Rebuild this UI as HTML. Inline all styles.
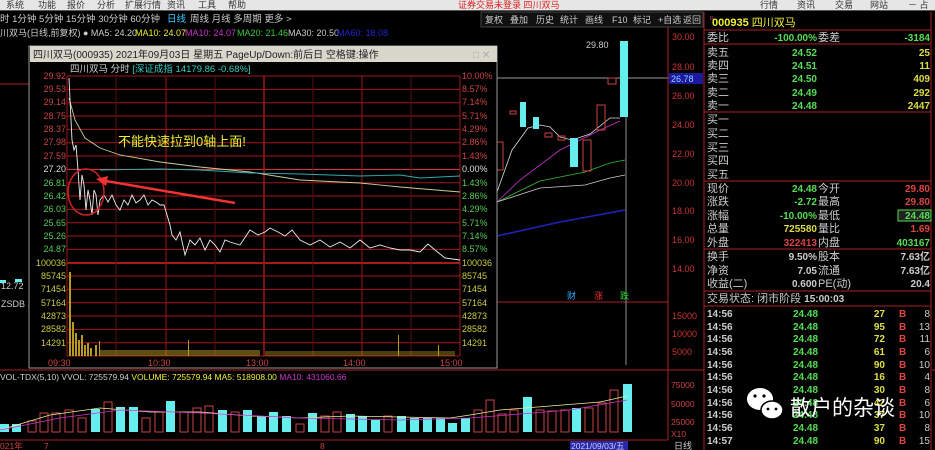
<!DOCTYPE html>
<html><head><meta charset="utf-8"><style>
html,body{margin:0;padding:0;background:#000;width:935px;height:450px;overflow:hidden}
svg{display:block}
text{font-family:"Liberation Sans","Noto Sans CJK SC",sans-serif}
</style></head><body>
<svg width="935" height="450" viewBox="0 0 935 450" xmlns="http://www.w3.org/2000/svg">
<rect width="935" height="450" fill="#000"/>
<rect x="0" y="0" width="935" height="10" fill="#e6e6e6"/>
<g font-size="9" fill="#333">
<text x="6" y="8">系统</text><text x="38" y="8">功能</text><text x="67" y="8">报价</text><text x="97" y="8">分析</text><text x="125" y="8">扩展行情</text><text x="167" y="8">资讯</text><text x="198" y="8">工具</text><text x="228" y="8">帮助</text>
<text x="760" y="8">行情</text><text x="797" y="8">资讯</text><text x="835" y="8">交易</text><text x="870" y="8">网站</text><text x="908" y="8">－ 占</text>
</g>
<text x="458" y="8" font-size="9" fill="#e02020">证券交易未登录 四川双马</text>
<rect x="0" y="10" width="935" height="1" fill="#555"/>
<g font-size="9.5" fill="#ccc">
<text x="0" y="22">时 1分钟 5分钟 15分钟 30分钟 60分钟</text>
<text x="167" y="22" fill="#3cf">日线</text><text x="190" y="22">周线 月线 多周期 更多 &gt;</text>
</g>
<g font-size="9" fill="#ccc">
<rect x="481" y="12" width="222" height="15" fill="#111" stroke="#444"/>
<text x="485" y="23">复权</text><text x="510" y="23">叠加</text><text x="536" y="23">历史</text><text x="560" y="23">统计</text><text x="585" y="23">画线</text><text x="612" y="23">F10</text><text x="633" y="23">标记</text><text x="658" y="23">+自选</text><text x="683" y="23">返回</text>
</g>
<g font-size="9">
<text x="0" y="36" fill="#ccc">川双马(日线,前复权) ● MA5: 24.20</text>
<text x="135" y="36" fill="#ee3">MA10: 24.07</text>
<text x="185" y="36" fill="#c3c">MA10: 24.07</text>
<text x="237" y="36" fill="#3c3">MA20: 21.46</text>
<text x="288" y="36" fill="#ccc">MA30: 20.50</text>
<text x="337" y="36" fill="#22c">MA60: 18.08</text>
</g>
<line x1="497" y1="78" x2="670" y2="78" stroke="#ccc" stroke-width="0.7"/>
<line x1="668" y1="27" x2="668" y2="440" stroke="#a22"/>
<line x1="0" y1="370" x2="935" y2="370" stroke="#a22"/>
<line x1="497" y1="302" x2="668" y2="302" stroke="#a22"/>
<g font-size="9" fill="#c33">
<text x="672" y="40">30.00</text><text x="672" y="70">28.00</text><text x="672" y="99">26.00</text><text x="672" y="128">24.00</text><text x="672" y="157">22.00</text><text x="672" y="186">20.00</text><text x="672" y="214">18.00</text><text x="672" y="243">16.00</text><text x="672" y="272">14.00</text>
<text x="672" y="319">15000</text><text x="672" y="337">10000</text><text x="672" y="355">5000</text>
</g>
<rect x="669" y="73" width="34" height="11" fill="#1a1aa0"/><text x="671" y="82" font-size="9" fill="#9cf">26.78</text>
<text x="586" y="48" font-size="9" fill="#ccc">29.80</text>
<polyline points="497,192 512,150 528,128 540,125 550,127 560,137 572,140 590,134 610,118 620,118" fill="none" stroke="#ddd" stroke-width="0.8"/>
<polyline points="497,202 520,180 560,150 600,130 620,121" fill="none" stroke="#c3c" stroke-width="0.8"/>
<polyline points="497,202 540,181 585,172 610,163 625,160" fill="none" stroke="#3b3" stroke-width="0.8"/>
<polyline points="497,202 540,188 585,185 610,178 625,175" fill="none" stroke="#ccc" stroke-width="0.8"/>
<polyline points="497,236 560,222 625,210" fill="none" stroke="#22b" stroke-width="1.6"/>
<rect x="497" y="142" width="6" height="28" fill="none" stroke="#c44"/>
<rect x="520" y="102" width="6" height="25" fill="#6ee"/><rect x="533" y="117" width="6" height="12" fill="#6ee"/>
<rect x="510" y="111" width="6" height="3" fill="none" stroke="#c44"/>
<rect x="545" y="133" width="7" height="4" fill="none" stroke="#c44"/><rect x="558" y="136" width="7" height="4" fill="none" stroke="#c44"/>
<rect x="570" y="138" width="8" height="29" fill="#6ee"/><rect x="583" y="140" width="8" height="31" fill="none" stroke="#c44"/>
<rect x="597" y="105" width="8" height="25" fill="none" stroke="#c44"/><rect x="608" y="78" width="8" height="6" fill="none" stroke="#c44"/>
<rect x="620" y="41" width="8" height="76" fill="#6ee"/>
<line x1="626" y1="117" x2="626" y2="365" stroke="#ccc" stroke-width="0.7"/>
<text x="567" y="299" font-size="9" fill="#3af">财</text><text x="594" y="299" font-size="9" fill="#e33">涨</text><text x="620" y="299" font-size="9" fill="#3d3">跌</text>
<line x1="0" y1="84" x2="29" y2="84" stroke="#a22"/>
<rect x="0" y="280" width="6" height="3" fill="#6ee"/><rect x="15" y="279" width="7" height="3" fill="#6ee"/>
<text x="1" y="289" font-size="9" fill="#ccc">12.72</text><text x="1" y="307" font-size="9" fill="#ccc">ZSDB 1</text>
<rect x="29" y="46" width="468" height="322" fill="#000" stroke="#999"/>
<rect x="30" y="46" width="467" height="16" fill="#d9d6cc"/>
<text x="33" y="58" font-size="10" fill="#222">四川双马(000935) 2021年09月03日 星期五 PageUp/Down:前后日 空格键:操作</text>
<text x="473" y="58" font-size="10" fill="#aaa">□ ✕</text>
<text x="70" y="72" font-size="9.5" fill="#ccc">四川双马  分时 <tspan fill="#3cb">[深证成指 14179.86 -0.68%]</tspan></text>
<g stroke="#a01818" stroke-width="1">
<line x1="67" y1="76" x2="460" y2="76"/><line x1="67" y1="89.4" x2="460" y2="89.4"/><line x1="67" y1="102.7" x2="460" y2="102.7"/><line x1="67" y1="116" x2="460" y2="116"/><line x1="67" y1="129.4" x2="460" y2="129.4"/><line x1="67" y1="142.7" x2="460" y2="142.7"/><line x1="67" y1="156" x2="460" y2="156"/><line x1="67" y1="169.4" x2="460" y2="169.4" stroke="#d44"/><line x1="67" y1="182.7" x2="460" y2="182.7"/><line x1="67" y1="196" x2="460" y2="196"/><line x1="67" y1="209.4" x2="460" y2="209.4"/><line x1="67" y1="222.7" x2="460" y2="222.7"/><line x1="67" y1="236" x2="460" y2="236"/><line x1="67" y1="249.4" x2="460" y2="249.4"/><line x1="67" y1="263" x2="460" y2="263" stroke="#d22" stroke-width="1.5"/><line x1="67" y1="276" x2="460" y2="276"/><line x1="67" y1="289.4" x2="460" y2="289.4"/><line x1="67" y1="302.7" x2="460" y2="302.7"/><line x1="67" y1="316" x2="460" y2="316"/><line x1="67" y1="329.4" x2="460" y2="329.4"/><line x1="67" y1="342.7" x2="460" y2="342.7"/><line x1="67" y1="356" x2="460" y2="356"/>
<line x1="67" y1="76" x2="67" y2="356"/><line x1="166" y1="76" x2="166" y2="356"/><line x1="264" y1="76" x2="264" y2="356" stroke-width="1.5"/><line x1="362" y1="76" x2="362" y2="356"/><line x1="460" y1="76" x2="460" y2="356"/>
<g stroke="#5a1010"><line x1="116" y1="76" x2="116" y2="356"/><line x1="215" y1="76" x2="215" y2="356"/><line x1="313" y1="76" x2="313" y2="356"/><line x1="411" y1="76" x2="411" y2="356"/></g>
</g>
<g font-size="9" text-anchor="end">
<g fill="#c44"><text x="66" y="79">29.92</text><text x="66" y="92">29.53</text><text x="66" y="105">29.14</text><text x="66" y="119">28.75</text><text x="66" y="132">28.37</text><text x="66" y="145">27.98</text><text x="66" y="159">27.59</text></g>
<text x="66" y="172" fill="#ddd">27.20</text>
<g fill="#5c5"><text x="66" y="186">26.81</text><text x="66" y="199">26.42</text><text x="66" y="212">26.03</text><text x="66" y="226">25.65</text><text x="66" y="239">25.26</text><text x="66" y="252">24.87</text></g>
<g fill="#cc4"><text x="66" y="266">100036</text><text x="66" y="279">85745</text><text x="66" y="292">71454</text><text x="66" y="306">57164</text><text x="66" y="319">42873</text><text x="66" y="332">28582</text><text x="66" y="346">14291</text></g>
</g>
<g font-size="9">
<g fill="#c44"><text x="462" y="79">10.00%</text><text x="462" y="92">8.57%</text><text x="462" y="105">7.14%</text><text x="462" y="119">5.71%</text><text x="462" y="132">4.29%</text><text x="462" y="145">2.86%</text><text x="462" y="159">1.43%</text></g>
<text x="462" y="172" fill="#ddd">0.00%</text>
<g fill="#5c5"><text x="462" y="186">1.43%</text><text x="462" y="199">2.86%</text><text x="462" y="212">4.29%</text><text x="462" y="226">5.71%</text><text x="462" y="239">7.14%</text><text x="462" y="252">8.57%</text></g>
<g fill="#cc4"><text x="462" y="266">100036</text><text x="462" y="279">85745</text><text x="462" y="292">71454</text><text x="462" y="306">57164</text><text x="462" y="319">42873</text><text x="462" y="332">28582</text><text x="462" y="346">14291</text></g>
<g fill="#c44"><text x="48" y="366">09:30</text><text x="148" y="366">10:30</text><text x="246" y="366">13:00</text><text x="343" y="366">14:00</text><text x="440" y="366">15:00</text></g>
</g>
<polyline points="69,98 75,120 85,138 100,148 120,155 160,162 200,167 250,172 300,180 360,183 400,187 460,192" fill="none" stroke="#cc9" stroke-width="0.9"/>
<polyline points="100,170 160,169 200,170 250,173 300,174 360,176 400,175 420,178 460,176" fill="none" stroke="#3aa" stroke-width="0.9"/>
<polyline points="69,78 70,100 72,140 74,150 76,145 78,170 80,200 82,175 84,185 86,210 88,190 90,200 92,215 94,190 96,195 98,215 100,200 104,195 108,202 112,195 116,205 120,210 124,200 128,205 132,195 136,203 140,200 144,195 148,205 152,200 156,202 160,205 164,205 170,225 172,235 176,240 180,232 185,255 190,240 195,245 200,238 205,250 210,240 215,245 220,252 225,240 230,242 240,245 250,230 258,235 265,232 270,228 278,232 285,236 292,230 300,240 310,245 320,240 330,247 340,242 350,248 360,240 370,248 380,245 390,248 400,250 410,250 420,252 428,244 435,250 445,258 460,260" fill="none" stroke="#eee" stroke-width="0.9"/>
<text x="118" y="146" font-size="13" fill="#ee3">不能快速拉到0轴上面!</text>
<ellipse cx="86" cy="192" rx="18" ry="23" fill="none" stroke="#c22" stroke-width="1.5"/>
<line x1="100" y1="180" x2="235" y2="203" stroke="#e33" stroke-width="2.5"/>
<polygon points="96,179 108,176 106,186" fill="#e33"/>
<g fill="#b99a20">
<rect x="69" y="272" width="2" height="84"/><rect x="72" y="322" width="2" height="34"/><rect x="75" y="333" width="2" height="23"/><rect x="78" y="340" width="2" height="16"/><rect x="81" y="335" width="2" height="21"/><rect x="84" y="345" width="2" height="11"/><rect x="87" y="343" width="2" height="13"/><rect x="90" y="348" width="2" height="8"/><rect x="95" y="345" width="2" height="11"/><rect x="99" y="341" width="1" height="15"/>
<rect x="100" y="350" width="160" height="6" opacity="0.5"/><rect x="265" y="351" width="190" height="5" opacity="0.4"/>
<rect x="188" y="340" width="1" height="16"/><rect x="398" y="335" width="1" height="21"/><rect x="438" y="345" width="1" height="11"/>
</g>
<text x="0" y="380" font-size="8.5" fill="#ccc">VOL-TDX(5,10) VVOL: 725579.94  <tspan fill="#ee3">VOLUME: 725579.94  MA5: 518908.00</tspan> <tspan fill="#c3c">MA10: 431060.66</tspan></text>
<g fill="#6ee">
<rect x="0" y="424" width="9" height="8"/><rect x="12" y="424" width="9" height="8"/><rect x="91" y="409" width="9" height="23"/><rect x="116" y="407" width="9" height="25"/><rect x="129" y="407" width="9" height="25"/><rect x="166" y="401" width="9" height="31"/><rect x="218" y="410" width="9" height="22"/><rect x="243" y="410" width="9" height="22"/><rect x="257" y="416" width="9" height="16"/><rect x="269" y="412" width="9" height="20"/><rect x="282" y="416" width="9" height="16"/><rect x="308" y="413" width="9" height="19"/><rect x="346" y="414" width="9" height="18"/><rect x="358" y="416" width="9" height="16"/><rect x="371" y="420" width="9" height="12"/><rect x="397" y="416" width="9" height="16"/><rect x="410" y="418" width="9" height="14"/><rect x="423" y="418" width="9" height="14"/><rect x="436" y="418" width="9" height="14"/><rect x="448" y="423" width="9" height="9"/><rect x="461" y="418" width="9" height="14"/><rect x="523" y="397" width="9" height="35"/><rect x="572" y="408" width="9" height="24"/><rect x="623" y="384" width="9" height="48"/>
</g>
<g fill="none" stroke="#c44">
<rect x="28" y="421" width="8" height="11"/><rect x="40" y="413" width="8" height="19"/><rect x="52" y="413" width="8" height="19"/><rect x="65" y="410" width="8" height="22"/><rect x="78" y="418" width="8" height="14"/><rect x="104" y="402" width="8" height="30"/><rect x="142" y="418" width="8" height="14"/><rect x="155" y="412" width="8" height="20"/><rect x="180" y="412" width="8" height="20"/><rect x="193" y="408" width="8" height="24"/><rect x="205" y="406" width="8" height="26"/><rect x="231" y="412" width="8" height="20"/><rect x="296" y="424" width="8" height="8"/><rect x="321" y="416" width="8" height="16"/><rect x="333" y="412" width="8" height="20"/><rect x="384" y="416" width="8" height="16"/><rect x="474" y="410" width="8" height="22"/><rect x="486" y="400" width="8" height="32"/><rect x="498" y="414" width="8" height="18"/><rect x="510" y="410" width="8" height="22"/><rect x="536" y="410" width="8" height="22"/><rect x="548" y="411" width="8" height="21"/><rect x="561" y="410" width="8" height="22"/><rect x="585" y="408" width="8" height="24"/><rect x="598" y="403" width="8" height="29"/><rect x="610" y="390" width="8" height="42"/>
</g>
<polyline points="0,430 50,415 100,408 150,412 200,412 250,416 300,418 350,416 400,417 450,418 470,415 500,410 550,406 600,402 627,396" fill="none" stroke="#ee9" stroke-width="0.8"/>
<polyline points="0,430 60,418 120,410 200,413 300,418 400,420 470,418 520,414 570,410 627,400" fill="none" stroke="#c3c" stroke-width="0.8"/>
<line x1="0" y1="440" x2="668" y2="440" stroke="#a22"/>
<text x="0" y="449" font-size="8.5" fill="#c44">021年</text><text x="44" y="449" font-size="8.5" fill="#c44">7</text><text x="320" y="449" font-size="8.5" fill="#c44">8</text>
<rect x="570" y="441" width="58" height="9" fill="#2a2aa8"/><text x="571" y="449" font-size="8.5" fill="#ccf">2021/09/03/五</text>
<g font-size="8.5" fill="#c44"><text x="671" y="388">75000</text><text x="671" y="407">50000</text><text x="671" y="425">25000</text><text x="671" y="437">X10</text></g>
<text x="674" y="449" font-size="9" fill="#ccc">日线</text>
<rect x="704" y="12" width="228" height="438" fill="#000"/>
<line x1="704" y1="12" x2="704" y2="450" stroke="#a22"/><line x1="931" y1="12" x2="931" y2="450" stroke="#a22"/>
<text x="710" y="20" font-size="5" fill="#c44">R</text>
<text x="712" y="26" font-size="11" fill="#ee3" font-weight="bold">000935 <tspan fill="#ee3" font-weight="normal">四川双马</tspan></text>
<g stroke="#a22"><line x1="704" y1="30" x2="931" y2="30"/><line x1="704" y1="44" x2="931" y2="44"/><line x1="704" y1="112" x2="931" y2="112"/><line x1="704" y1="181" x2="931" y2="181"/><line x1="704" y1="249" x2="931" y2="249"/><line x1="704" y1="291" x2="931" y2="291"/><line x1="704" y1="306" x2="931" y2="306"/></g>
<g font-size="11" fill="#ccc">
<text x="707" y="41">委比</text><text x="818" y="41">委差</text>
<text x="707" y="56">卖五</text><text x="707" y="69">卖四</text><text x="707" y="82">卖三</text><text x="707" y="96">卖二</text><text x="707" y="109">卖一</text>
<text x="707" y="123">买一</text><text x="707" y="137">买二</text><text x="707" y="151">买三</text><text x="707" y="164">买四</text><text x="707" y="178">买五</text>
<text x="707" y="192">现价</text><text x="818" y="192">今开</text><text x="707" y="205">涨跌</text><text x="818" y="205">最高</text><text x="707" y="219">涨幅</text><text x="818" y="219">最低</text>
<text x="707" y="232">总量</text><text x="818" y="232">量比</text><text x="707" y="246">外盘</text><text x="818" y="246">内盘</text>
<text x="707" y="260">换手</text><text x="818" y="260">股本</text><text x="707" y="274">净资</text><text x="818" y="274">流通</text><text x="707" y="287">收益(二)</text><text x="818" y="287">PE(动)</text>
<text x="707" y="302">交易状态: 闭市阶段 <tspan font-size="10" font-weight="bold">15:00:03</tspan></text>
</g>
<g font-size="10" font-weight="bold" text-anchor="end">
<text x="817" y="41" fill="#5d5">-100.00%</text><text x="930" y="41" fill="#5d5">-3184</text>
<g fill="#5d5"><text x="817" y="56">24.52</text><text x="817" y="69">24.51</text><text x="817" y="82">24.50</text><text x="817" y="96">24.49</text><text x="817" y="109">24.48</text></g>
<g fill="#dd4"><text x="930" y="56">25</text><text x="930" y="69">11</text><text x="930" y="82">409</text><text x="930" y="96">292</text><text x="930" y="109">2447</text></g>
<text x="817" y="192" fill="#5d5">24.48</text><text x="930" y="192" fill="#d44">29.80</text>
<text x="817" y="205" fill="#5d5">-2.72</text><text x="930" y="205" fill="#d44">29.80</text>
<text x="817" y="219" fill="#5d5">-10.00%</text><rect x="898" y="210" width="33" height="11" fill="#222" stroke="#5d5"/><text x="930" y="219" fill="#5d5">24.48</text>
<text x="817" y="232" fill="#dd4">725580</text><text x="930" y="232" fill="#d44">1.69</text>
<text x="817" y="246" fill="#d44">322413</text><text x="930" y="246" fill="#5d5">403167</text>
<g fill="#ccc"><text x="817" y="260">9.50%</text><text x="930" y="260">7.63亿</text><text x="817" y="274">7.05</text><text x="930" y="274">7.63亿</text><text x="817" y="287">0.600</text><text x="930" y="287">20.4</text></g>
</g>
<g font-size="10" font-weight="bold">
<g fill="#ccc"><text x="707" y="317">14:56</text><text x="707" y="330">14:56</text><text x="707" y="342">14:56</text><text x="707" y="355">14:56</text><text x="707" y="368">14:56</text><text x="707" y="380">14:56</text><text x="707" y="393">14:56</text><text x="707" y="406">14:56</text><text x="707" y="418">14:56</text><text x="707" y="431">14:56</text><text x="707" y="444">14:57</text></g>
<g fill="#5d5"><text x="793" y="317">24.48</text><text x="793" y="330">24.48</text><text x="793" y="342">24.48</text><text x="793" y="355">24.48</text><text x="793" y="368">24.48</text><text x="793" y="380">24.48</text><text x="793" y="393">24.48</text><text x="793" y="406">24.48</text><text x="793" y="418">24.48</text><text x="793" y="431">24.48</text><text x="793" y="444">24.48</text></g>
<g fill="#dd4" text-anchor="end"><text x="885" y="317">27</text><text x="885" y="330">95</text><text x="885" y="342">72</text><text x="885" y="355">61</text><text x="885" y="368">90</text><text x="885" y="380">16</text><text x="885" y="393">30</text><text x="885" y="406">42</text><text x="885" y="418">37</text><text x="885" y="431">37</text><text x="885" y="444">90</text></g>
<g fill="#d44"><text x="899" y="317">B</text><text x="899" y="330">B</text><text x="899" y="342">B</text><text x="899" y="355">B</text><text x="899" y="368">B</text><text x="899" y="380">B</text><text x="899" y="393">B</text><text x="899" y="406">B</text><text x="899" y="418">B</text><text x="899" y="431">B</text><text x="899" y="444">B</text></g>
<g fill="#ccc" text-anchor="end" font-weight="normal"><text x="930" y="317">8</text><text x="930" y="330">13</text><text x="930" y="342">11</text><text x="930" y="355">6</text><text x="930" y="368">10</text><text x="930" y="380">4</text><text x="930" y="393">8</text><text x="930" y="406">6</text><text x="930" y="418">10</text><text x="930" y="431">8</text><text x="930" y="444">15</text></g>
</g>
<ellipse cx="760" cy="399" rx="13" ry="11" fill="#fff"/><ellipse cx="772" cy="410" rx="11" ry="9" fill="#fff" stroke="#000" stroke-width="1.5"/>
<circle cx="755" cy="396" r="1.6" fill="#000"/><circle cx="764" cy="396" r="1.6" fill="#000"/><circle cx="768" cy="409" r="1.4" fill="#000"/><circle cx="776" cy="409" r="1.4" fill="#000"/>
<text x="790" y="415" font-size="21" fill="#fff">散户的杂谈</text>
</svg>
</body></html>
